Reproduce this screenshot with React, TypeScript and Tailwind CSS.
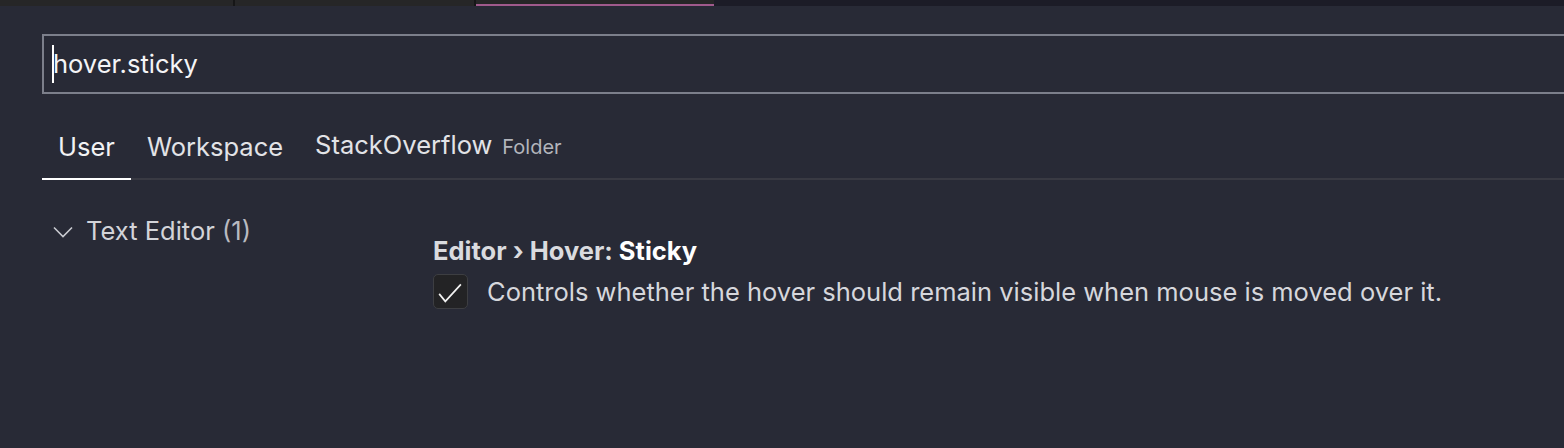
import React from "react";

export default function App() {
  return (
    <div
      className="w-[1564px] h-[448px] bg-[#282a36] overflow-hidden text-white"
      style={{ fontFamily: "Inter, 'Noto Sans', sans-serif" }}
    >
      {/* top editor tabs strip */}
      <div className="flex h-[6px] bg-[#1c1c27]">
        <div className="w-[233px] bg-[#262627]" />
        <div className="w-[2px] bg-[#161617]" />
        <div className="w-[239px] bg-[#262627]" />
        <div className="w-[2px] bg-[#161617]" />
        <div className="w-[238px] bg-[#262627] border-b-2 border-[#a05a8c]" />
      </div>

      {/* search box */}
      <div className="mt-[28px] ml-[42px] h-[60px] w-[1540px] border-2 border-[#7c7f8b] flex items-center pl-[8px]">
        <div className="w-[2px] h-[38px] bg-white" />
        <span className="text-[25.5px] leading-[30px] text-[#f4f4f6] -ml-[1px]">hover.sticky</span>
      </div>

      {/* scope tabs */}
      <div className="mt-[36px] ml-[42px] flex items-end border-b-2 border-[#393a43]">
        <div className="px-[16px] pb-[16px] border-b-2 border-white -mb-[2px] text-[25.5px] leading-[30px] text-[#f2f2f4]">
          User
        </div>
        <div className="px-[16px] pb-[16px] text-[25.5px] leading-[30px] text-[#e2e3e7]">
          Workspace
        </div>
        <div className="px-[16px] pb-[16px] flex items-baseline text-[25.5px] leading-[30px] text-[#e2e3e7]">
          StackOverflow
          <span className="ml-[10px] text-[20px] text-[#b3b5bc]">Folder</span>
        </div>
      </div>

      {/* content */}
      <div className="flex">
        <div className="w-[380px] pl-[53px] pt-[36px] flex items-start">
          <div className="flex items-center h-[30px]">
            <svg width="20" height="12" viewBox="0 0 20 12" className="mt-[2px]">
              <path d="M1 1.5 L10 10.5 L19 1.5" stroke="#c9cad0" strokeWidth="1.6" fill="none" />
            </svg>
            <span className="ml-[13px] text-[25.5px] leading-[30px] text-[#d3d4d9]">
              Text Editor <span className="text-[#b9bac1]">(1)</span>
            </span>
          </div>
        </div>
        <div className="pl-[53px] pt-[56px]">
          <div className="text-[25.5px] leading-[30px] font-bold text-[#dadbdf]">
            Editor › Hover: <span className="text-white">Sticky</span>
          </div>
          <div className="mt-[8px] flex items-center">
            <div className="w-[35px] h-[35px] rounded-[5px] bg-[#232325] border border-[#3d3e42] flex items-center justify-center">
              <svg width="35" height="35" viewBox="0 0 35 35">
                <path d="M5.5 20 L12 28 L28.5 10" stroke="#f2f2f2" strokeWidth="1.8" fill="none" />
              </svg>
            </div>
            <span className="ml-[19px] text-[25.5px] leading-[30px] text-[#d6d7dc]">
              Controls whether the hover should remain visible when mouse is moved over it.
            </span>
          </div>
        </div>
      </div>
    </div>
  );
}
